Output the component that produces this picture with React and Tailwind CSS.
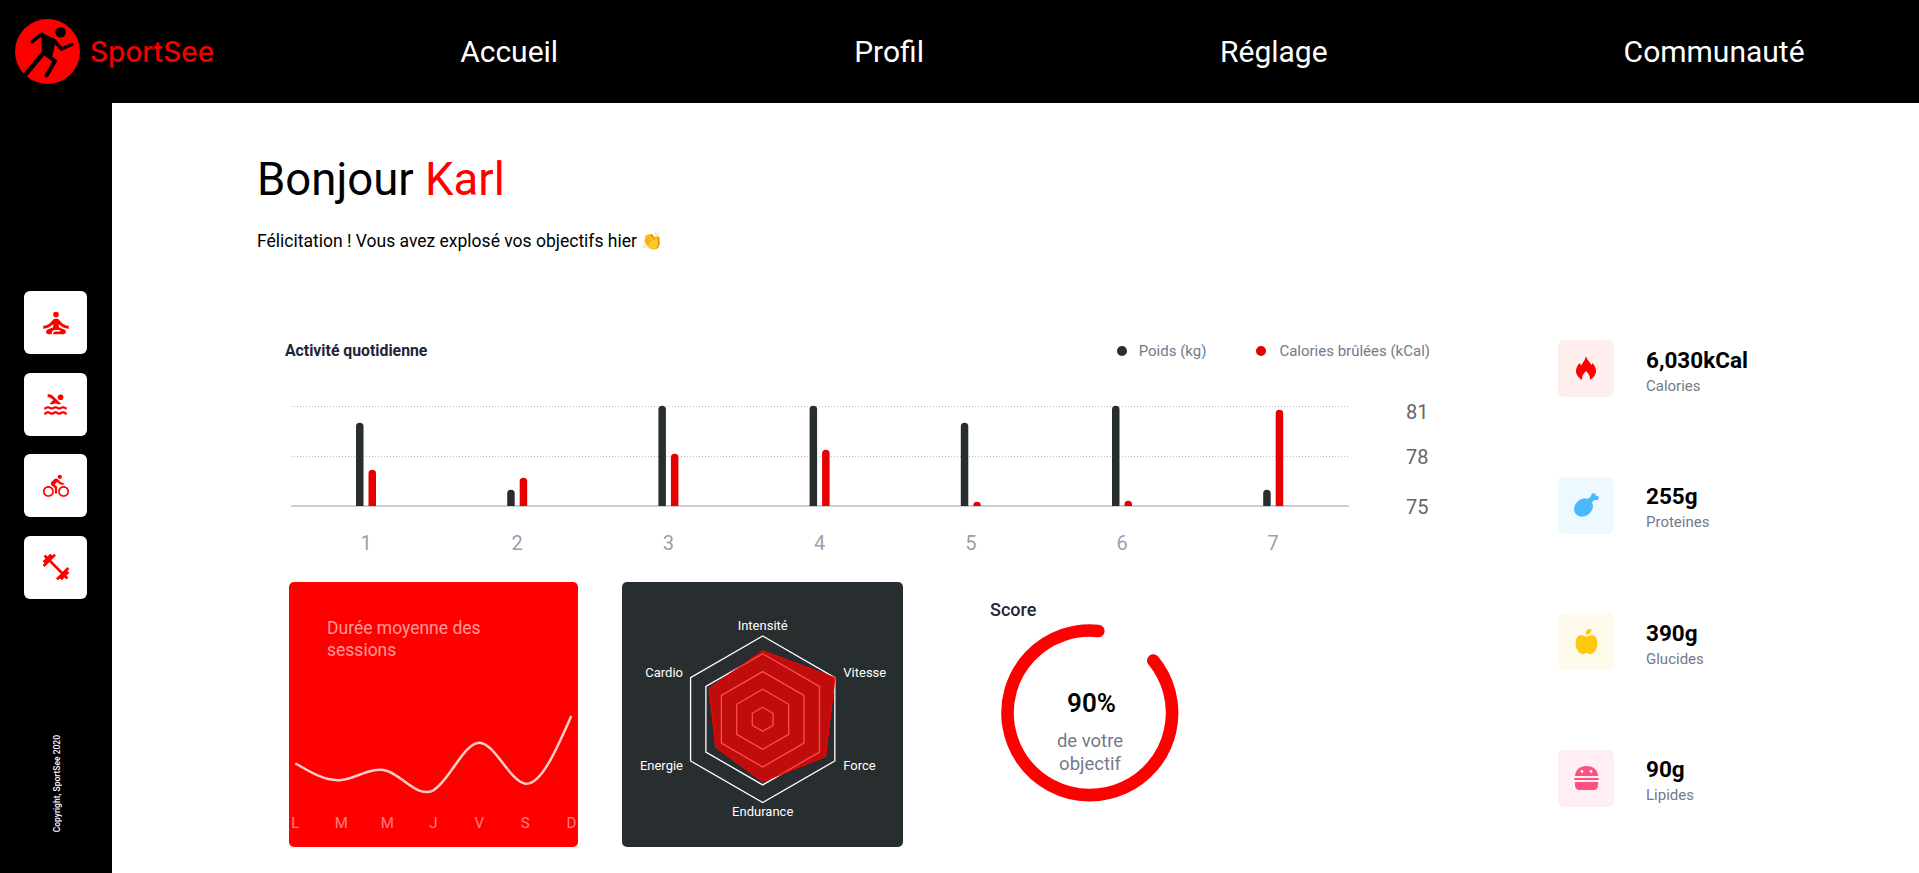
import React from 'react';
import { MdSelfImprovement, MdPool, MdDirectionsBike, MdFitnessCenter } from 'react-icons/md';
import { FaAppleAlt } from 'react-icons/fa';

const bars = [
  { x: 356, w: 423, c: 470 },
  { x: 507.2, w: 490, c: 478 },
  { x: 658.4, w: 406, c: 454 },
  { x: 809.6, w: 406, c: 450 },
  { x: 960.8, w: 423, c: 502 },
  { x: 1112, w: 406, c: 501 },
  { x: 1263.2, w: 490, c: 410 },
];

const sessions = [
  [295.3, 763.3], [341.3, 780], [387.3, 771], [433.3, 790.3], [479.3, 742.7], [525.3, 783.7], [571.3, 716],
];

// natural cubic spline, same as the chart lib's "natural" curve
const naturalPath = (pts) => {
  const solve = (v) => {
    const n = v.length - 1;
    const a = [], b = [], r = [];
    a[0] = 0; b[0] = 2; r[0] = v[0] + 2 * v[1];
    for (let i = 1; i < n - 1; i++) { a[i] = 1; b[i] = 4; r[i] = 4 * v[i] + 2 * v[i + 1]; }
    a[n - 1] = 2; b[n - 1] = 7; r[n - 1] = 8 * v[n - 1] + v[n];
    for (let i = 1; i < n; i++) {
      const m = a[i] / b[i - 1];
      b[i] -= m;
      r[i] -= m * r[i - 1];
    }
    a[n - 1] = r[n - 1] / b[n - 1];
    for (let i = n - 2; i >= 0; i--) a[i] = (r[i] - a[i + 1]) / b[i];
    b[n - 1] = (v[n] + a[n - 1]) / 2;
    for (let i = 0; i < n - 1; i++) b[i] = 2 * v[i + 1] - a[i + 1];
    return [a, b];
  };
  const [ax, bx] = solve(pts.map((p) => p[0]));
  const [ay, by] = solve(pts.map((p) => p[1]));
  let d = `M${pts[0][0]} ${pts[0][1]}`;
  for (let i = 0; i < pts.length - 1; i++) {
    d += `C${ax[i]} ${ay[i]} ${bx[i]} ${by[i]} ${pts[i + 1][0]} ${pts[i + 1][1]}`;
  }
  return d;
};

const hexagon = (r) => {
  const cx = 762.7;
  const cy = 719.3;
  return [0, 60, 120, 180, 240, 300]
    .map((a) => {
      const t = (a * Math.PI) / 180;
      return `${cx + r * Math.sin(t)},${cy - r * Math.cos(t)}`;
    })
    .join(' ');
};

const Logo = () => (
  <svg width="65" height="65" viewBox="15 17.5 65 65" className="shrink-0">
    <circle cx="47.5" cy="50" r="32.5" fill="#ff0000" />
    <circle cx="60.7" cy="30.7" r="5.3" fill="#000" />
    <path d="M41 31 L56 38 L52 56 L42 52 Z" fill="#000" />
    <path d="M32 40.5 L41.7 32.5 M54 39 L61.7 47.5 L71.7 43" stroke="#000" strokeWidth="3.5" fill="none" strokeLinecap="round" strokeLinejoin="round" />
    <path d="M43 52 L23 76" stroke="#000" strokeWidth="4.5" fill="none" />
    <path d="M46 53 L55 59.5 L46.5 74" stroke="#000" strokeWidth="4" fill="none" strokeLinecap="round" strokeLinejoin="round" />
  </svg>
);

const Flame = () => (
  <svg width="20" height="25" viewBox="0 0 20 25" fill="#ff0000">
    <path d="M10 0 C11 4 14 6 15.5 9 L16.5 7 C18.5 9.5 20 12 20 15 C20 19 17 22 14 24 C14.5 21 13 18 10 15 C7 18 5.5 21 6 24 C3 22 0 19 0 15 C0 11.5 2 9 3.5 7 L5 9.5 C6.5 7 9.5 4 10 0 Z" />
  </svg>
);

const Drumstick = () => (
  <svg width="25" height="24" viewBox="0 0 25 24" fill="#4ab8ff">
    <ellipse cx="9.5" cy="14.5" rx="10" ry="8.5" transform="rotate(-40 9.5 14.5)" />
    <path d="M13 10 L20 4" stroke="#4ab8ff" strokeWidth="5" />
    <circle cx="19.5" cy="2.5" r="2.3" />
    <circle cx="22.5" cy="5" r="2.3" />
  </svg>
);

const Burger = () => (
  <svg width="25" height="24" viewBox="0 0 25 24" fill="#fd5181">
    <path d="M1 10 C1 4 6 0 12.5 0 C19 0 24 4 24 10 Z" />
    <circle cx="8" cy="5.5" r="1.4" fill="#ffeef3" />
    <circle cx="17" cy="5.5" r="1.4" fill="#ffeef3" />
    <rect x="0" y="12" width="25" height="2" rx="1" />
    <path d="M1 16 H24 V19 C24 22 22 24 19.5 24 H5.5 C3 24 1 22 1 19 Z" />
  </svg>
);

const nutrition = [
  { icon: <Flame />, bg: 'bg-[#ffeeee]', value: '6,030kCal', label: 'Calories' },
  { icon: <Drumstick />, bg: 'bg-[#eef8ff]', value: '255g', label: 'Proteines' },
  { icon: <FaAppleAlt size={25} color="#fcc90c" />, bg: 'bg-[#fefaeb]', value: '390g', label: 'Glucides' },
  { icon: <Burger />, bg: 'bg-[#ffeef3]', value: '90g', label: 'Lipides' },
];

const NavItem = ({ children }) => <a className="text-[30px] leading-none text-white">{children}</a>;

const SideButton = ({ children }) => (
  <div className="flex h-[63px] w-[63px] items-center justify-center rounded-[6px] bg-white text-[#ff0000]">{children}</div>
);

const App = () => {
  return (
    <div className="flex h-[873px] flex-col overflow-hidden bg-white font-['Roboto',sans-serif]">
      <header className="flex h-[103px] shrink-0 items-center bg-black pl-[15px]">
        <Logo />
        <span className="ml-[10px] font-['Inter',sans-serif] text-[28px] font-medium text-[#f00000]">SportSee</span>
        <nav className="ml-[246px] flex gap-[296px]">
          <NavItem>Accueil</NavItem>
          <NavItem>Profil</NavItem>
          <NavItem>Réglage</NavItem>
          <NavItem>Communauté</NavItem>
        </nav>
      </header>

      <div className="flex flex-1">
        <aside className="flex w-[112px] shrink-0 flex-col bg-black pl-[24px] pt-[188px] pb-[41px]">
          <div className="flex flex-col gap-[18.5px]">
            <SideButton><MdSelfImprovement size={34} /></SideButton>
            <SideButton><MdPool size={27} /></SideButton>
            <SideButton><MdDirectionsBike size={26} /></SideButton>
            <SideButton><MdFitnessCenter size={32} /></SideButton>
          </div>
          <p className="ml-[27px] mt-auto rotate-180 text-[8.5px] font-medium text-white [writing-mode:vertical-rl]">Copyright, SportSee 2020</p>
        </aside>

        <main className="flex-1 pl-[145px] pt-[54px]">
          <h1 className="h-[45px] text-[45.5px] leading-[45px] text-black">Bonjour <span className="text-[#ff0000]">Karl</span></h1>
          <p className="mt-[28px] text-[17.5px] leading-[22px] text-black">Félicitation ! Vous avez explosé vos objectifs hier 👏</p>

          <div className="mt-[88px] flex">
            <section className="ml-[28px] w-[1155px]">
              <div className="flex h-[22px] items-center">
                <h2 className="text-[15.8px] font-bold text-[#20253a]">Activité quotidienne</h2>
                <div className="ml-auto mr-[10px] flex items-center text-[15px] text-[#74798c]">
                  <span className="h-[10px] w-[10px] rounded-full bg-[#282d30]"></span>
                  <span className="ml-[12px]">Poids (kg)</span>
                  <span className="ml-[50px] h-[10px] w-[10px] rounded-full bg-[#e60000]"></span>
                  <span className="ml-[13px]">Calories brûlées (kCal)</span>
                </div>
              </div>

              <svg width="1155" height="210" viewBox="285 362 1155 210" className="block">
                <line x1="291" x2="1349" y1="406.5" y2="406.5" stroke="#bbb" strokeDasharray="1 2" />
                <line x1="291" x2="1349" y1="456.5" y2="456.5" stroke="#bbb" strokeDasharray="1 2" />
                <line x1="291" x2="1349" y1="506" y2="506" stroke="#9b9eac" />
                {bars.map((b, i) => (
                  <g key={b.x}>
                    <path d={`M${b.x} 506 V${b.w + 3.5} a3.75 3.75 0 0 1 7.5 0 V506 Z`} fill="#282d30" />
                    <path d={`M${b.x + 12.5} 506 V${b.c + 3.5} a3.75 3.75 0 0 1 7.5 0 V506 Z`} fill="#e60000" />
                    <text x={b.x + 10} y="550" textAnchor="middle" fontSize="20" fill="#9b9eac">{i + 1}</text>
                  </g>
                ))}
                <text x="1406" y="419" fontSize="20" fill="#666">81</text>
                <text x="1406" y="463.5" fontSize="20" fill="#666">78</text>
                <text x="1406" y="514" fontSize="20" fill="#666">75</text>
              </svg>

              <div className="ml-[4px] mt-[10px] flex">
                <div className="flex h-[265px] w-[289px] flex-col rounded-[5px] bg-[#ff0000]">
                  <p className="ml-[38px] mt-[36px] w-[190px] text-[17.5px] leading-[21.5px] text-white/60">Durée moyenne des sessions</p>
                  <svg width="289" height="147" viewBox="289 700 289 147" className="mt-auto block">
                    <path d={naturalPath(sessions)} fill="none" stroke="#fff" strokeOpacity="0.8" strokeWidth="2.5" />
                    {sessions.map((p, i) => (
                      <text key={i} x={p[0]} y="828" textAnchor="middle" fontSize="15" fill="#fff" fillOpacity="0.5">{'LMMJVSD'[i]}</text>
                    ))}
                  </svg>
                </div>

                <div className="ml-[44px] h-[265px] w-[281px] rounded-[5px] bg-[#282d30]">
                  <svg width="281" height="265" viewBox="622 582 281 265" className="block">
                    {[12, 30, 47.7, 65.6, 83.3].map((r) => (
                      <polygon key={r} points={hexagon(r)} fill="none" stroke="#fff" strokeWidth="1.3" />
                    ))}
                    <polygon
                      points="762.7,650.7 835,677.7 825.7,756.7 762.7,781.7 715.7,747.3 709,688.3"
                      fill="#ff0000"
                      fillOpacity="0.7"
                      stroke="#ff0000"
                    />
                    <g fontSize="13" fill="#fff">
                      <text x="762.7" y="630" textAnchor="middle">Intensité</text>
                      <text x="843.3" y="677">Vitesse</text>
                      <text x="843.3" y="770">Force</text>
                      <text x="762.7" y="816" textAnchor="middle">Endurance</text>
                      <text x="683" y="770" textAnchor="end">Energie</text>
                      <text x="683" y="677" textAnchor="end">Cardio</text>
                    </g>
                  </svg>
                </div>

                <div className="ml-[87px] pt-[18px]">
                  <h2 className="text-[18px] font-medium leading-5 text-[#20253a]">Score</h2>
                  <div className="relative ml-[12px] mt-[4px] h-[178px] w-[176px]">
                    <svg width="176" height="178" viewBox="1002 624 176 178" className="block overflow-visible">
                      <path d="M1098.3 631 A82.3 82.3 0 1 0 1153.3 660.5" fill="none" stroke="#ff0000" strokeWidth="12.6" strokeLinecap="round" />
                    </svg>
                    <div className="absolute inset-0 flex flex-col items-center pt-[64px] text-center">
                      <span className="ml-[3px] text-[26px] font-semibold leading-[30px] text-black">90%</span>
                      <span className="mt-[12px] w-[90px] text-[18.5px] leading-[23px] text-[#74798c]">de votre objectif</span>
                    </div>
                  </div>
                </div>
              </div>
            </section>

            <section className="ml-[118px] flex flex-col gap-[79.5px]">
              {nutrition.map((n) => (
                <div key={n.label} className="flex h-[57px] items-center">
                  <div className={`flex h-[57px] w-[56px] items-center justify-center rounded-[6px] ${n.bg}`}>{n.icon}</div>
                  <div className="ml-[32px] pt-[8px]">
                    <p className="text-[22.5px] font-bold leading-[26px] text-black">{n.value}</p>
                    <p className="text-[15px] leading-[26px] text-[#74798c]">{n.label}</p>
                  </div>
                </div>
              ))}
            </section>
          </div>
        </main>
      </div>
    </div>
  );
};

export default App;
